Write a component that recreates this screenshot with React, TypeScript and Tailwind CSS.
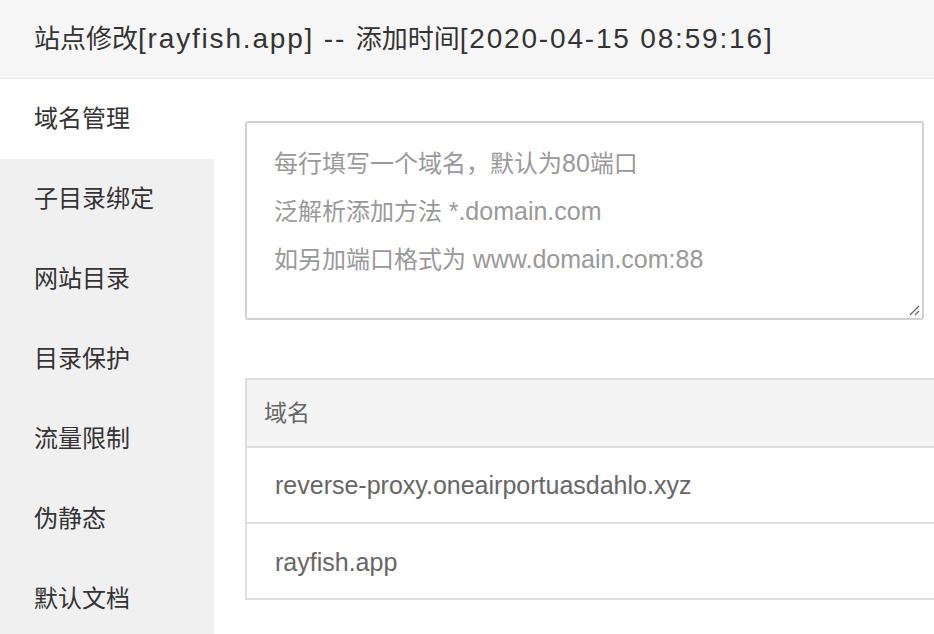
import React from "react";

const menu = ["域名管理", "子目录绑定", "网站目录", "目录保护", "流量限制", "伪静态", "默认文档"];

export default function App() {
  const font = { fontFamily: '"Liberation Sans", "Noto Sans CJK SC", sans-serif' };
  const L = "text-[28px] tracking-[0.065em]";
  const l = "text-[25px] leading-none";
  return (
    <div className="w-[934px] h-[634px] overflow-hidden bg-white" style={font}>
      <div className="h-[79px] bg-[#f6f6f6] border-b border-[#e5e5e5] flex items-center pl-[34px] text-[26px] text-[#333] whitespace-nowrap">
        <span>站点修改</span>
        <span className={L}>[rayfish.app] --&nbsp;</span>
        <span>添加时间</span>
        <span className={L}>[2020-04-15 08:59:16]</span>
      </div>
      <div className="flex">
        <div className="w-[214px] shrink-0 bg-[#f0f0f0] flex flex-col">
          {menu.map((m, i) => (
            <div
              key={m}
              className={
                "h-[80px] flex items-center pl-[34px] text-[24px] text-[#333] " +
                (i === 0 ? "bg-white" : "")
              }
            >
              {m}
            </div>
          ))}
        </div>
        <div className="flex-1 pl-[31px] pt-[42px]">
          <div className="w-[679px] h-[199px] border-2 border-[#d2d2d2] rounded-[3px] pl-[27px] pt-[17px] text-[24px] leading-[48px] text-[#999] relative whitespace-nowrap">
            <div className="h-[48px]">
              每行填写一个域名，默认为<span className={l}>80</span>端口
            </div>
            <div className="h-[48px]">
              泛解析添加方法 <span className={l}>*.domain.com</span>
            </div>
            <div className="h-[48px]">
              如另加端口格式为 <span className={l}>www.domain.com:88</span>
            </div>
            <svg className="absolute right-[2px] bottom-[2px]" width="12" height="12" viewBox="0 0 12 12">
              <line x1="11" y1="2" x2="2" y2="11" stroke="#666" strokeWidth="1.3" />
              <line x1="11" y1="7" x2="7" y2="11" stroke="#666" strokeWidth="1.3" />
            </svg>
          </div>
          <div className="mt-[58px] w-[760px] border-2 border-[#dedede]">
            <div className="h-[68px] bg-[#f4f4f4] flex items-center pl-[17px] text-[23px] text-[#666] border-b-2 border-[#dedede]">
              域名
            </div>
            <div className="h-[76px] flex items-center pl-[28px] pt-[2px] text-[25px] text-[#666] border-b-2 border-[#dedede]">
              reverse-proxy.oneairportuasdahlo.xyz
            </div>
            <div className="h-[74px] flex items-center pl-[28px] pt-[3px] text-[25px] text-[#666]">
              rayfish.app
            </div>
          </div>
        </div>
      </div>
    </div>
  );
}
